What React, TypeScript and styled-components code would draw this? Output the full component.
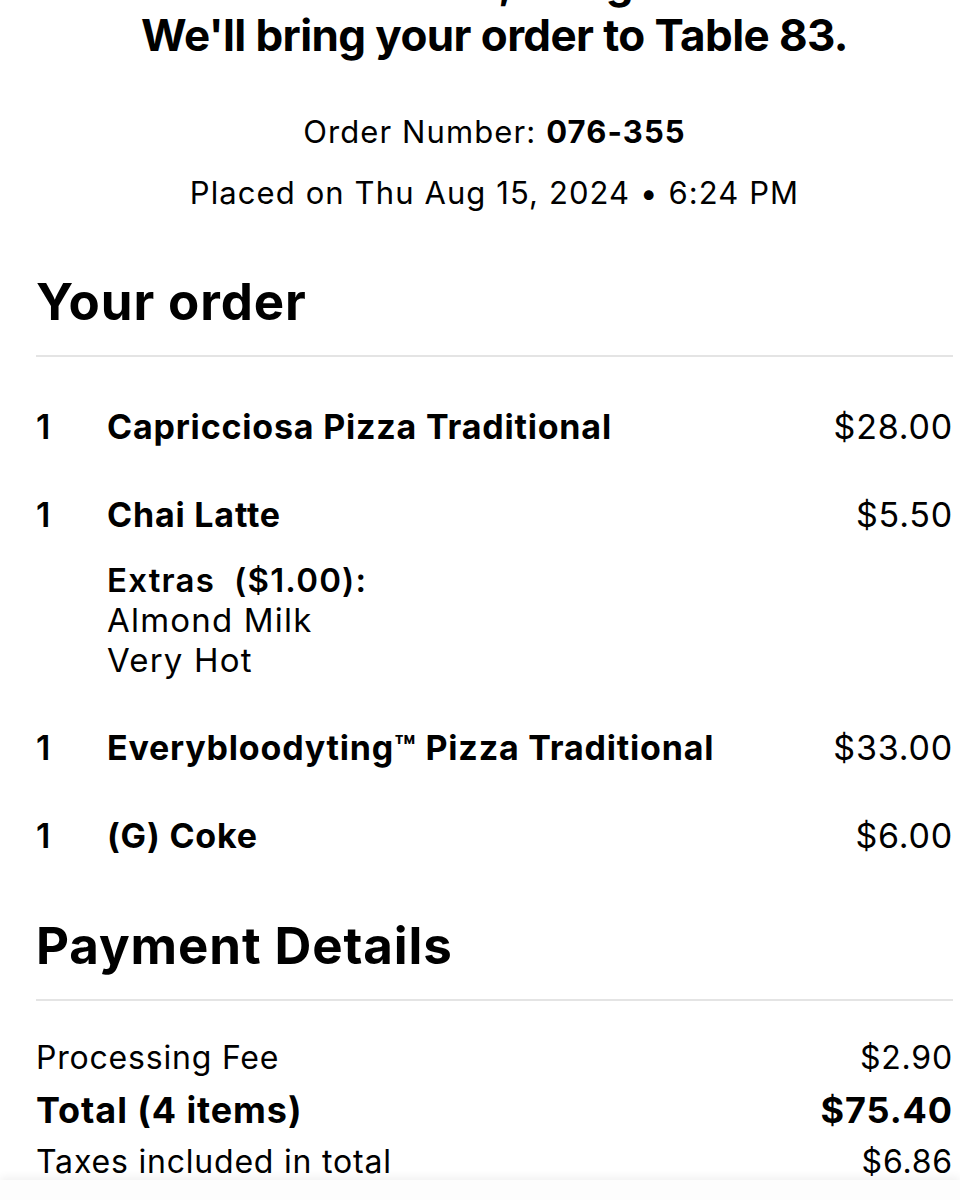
import React from "react";
import styled, { createGlobalStyle } from "styled-components";

// --- Global ---

const GlobalStyle = createGlobalStyle`
  html, body {
    margin: 0;
    padding: 0;
    background: #ffffff;
    color: #000000;
    font-family: Inter, "Noto Sans", "Liberation Sans", sans-serif;
    overflow: hidden;
  }
`;

// --- Styled Components ---

const Page = styled.div`
  padding: 0 7px 0 36px;
`;

const Header = styled.header`
  margin-top: -44px;
  text-align: center;
`;

const HeaderTitle = styled.h1`
  margin: 0;
  font-size: 44px;
  line-height: 53px;
  font-weight: 700;
  letter-spacing: -0.6px;
  white-space: nowrap;
`;

const Meta = styled.div`
  margin-top: 50px;
  display: flex;
  flex-direction: column;
  align-items: center;
  gap: 21px;
`;

const MetaLine = styled.p`
  margin: 0;
  font-size: 31px;
  line-height: 40px;
  font-weight: 400;
  letter-spacing: 1.1px;

  b {
    font-weight: 700;
  }
`;

const Section = styled.section<{ $top: number }>`
  margin-top: ${(p) => p.$top}px;
`;

const SectionTitle = styled.h2`
  margin: 0;
  font-size: 51px;
  line-height: 58px;
  font-weight: 700;
  letter-spacing: 0.9px;
  padding-bottom: 24px;
  border-bottom: 2px solid #e4e4e4;
`;

const ItemList = styled.div`
  padding-top: 50px;
  display: flex;
  flex-direction: column;
  gap: 48px;
`;

const ItemRow = styled.div`
  display: grid;
  grid-template-columns: 71px 1fr auto;
  font-size: 34px;
  line-height: 40px;
  letter-spacing: 0.8px;
`;

const Qty = styled.span`
  font-weight: 600;
`;

const ItemName = styled.span`
  font-weight: 700;
`;

const Price = styled.span`
  font-weight: 400;
  text-align: right;
`;

const Extras = styled.div`
  grid-column: 2 / 3;
  margin-top: 25px;
  font-size: 33px;
  line-height: 40px;
  letter-spacing: 1.2px;
`;

const ExtrasLabel = styled.div`
  font-weight: 600;
  white-space: pre;
`;

const Summary = styled.div`
  padding-top: 39px;
`;

const SummaryRow = styled.div<{ $strong?: boolean }>`
  display: flex;
  justify-content: space-between;
  font-size: ${(p) => (p.$strong ? 36 : 32)}px;
  line-height: ${(p) => (p.$strong ? 68 : 36)}px;
  font-weight: ${(p) => (p.$strong ? 700 : 400)};
  letter-spacing: ${(p) => (p.$strong ? 0.9 : 0.8)}px;
`;

const BottomBar = styled.div`
  position: fixed;
  left: 0;
  right: 0;
  bottom: 0;
  height: 20px;
  background: #fdfdfd;
  box-shadow: 0 -3px 8px rgba(0, 0, 0, 0.06);
`;

// --- Data ---

type Item = {
  qty: number;
  name: string;
  price: string;
  extras?: { label: string; options: string[] };
};

const items: Item[] = [
  { qty: 1, name: "Capricciosa Pizza Traditional", price: "$28.00" },
  {
    qty: 1,
    name: "Chai Latte",
    price: "$5.50",
    extras: { label: "Extras  ($1.00):", options: ["Almond Milk", "Very Hot"] },
  },
  { qty: 1, name: "Everybloodyting™ Pizza Traditional", price: "$33.00" },
  { qty: 1, name: "(G) Coke", price: "$6.00" },
];

// --- App ---

const App: React.FC = () => {
  return (
    <>
      <GlobalStyle />
      <Page>
        <Header>
          <HeaderTitle>Thanks, Craig!</HeaderTitle>
          <HeaderTitle>We'll bring your order to Table 83.</HeaderTitle>
        </Header>

        <Meta>
          <MetaLine>
            Order Number: <b>076-355</b>
          </MetaLine>
          <MetaLine>Placed on Thu Aug 15, 2024 • 6:24 PM</MetaLine>
        </Meta>

        <Section $top={60}>
          <SectionTitle>Your order</SectionTitle>
          <ItemList>
            {items.map((item) => (
              <ItemRow key={item.name}>
                <Qty>{item.qty}</Qty>
                <ItemName>{item.name}</ItemName>
                <Price>{item.price}</Price>
                {item.extras && (
                  <Extras>
                    <ExtrasLabel>{item.extras.label}</ExtrasLabel>
                    {item.extras.options.map((opt) => (
                      <div key={opt}>{opt}</div>
                    ))}
                  </Extras>
                )}
              </ItemRow>
            ))}
          </ItemList>
        </Section>

        <Section $top={61}>
          <SectionTitle>Payment Details</SectionTitle>
          <Summary>
            <SummaryRow>
              <span>Processing Fee</span>
              <span>$2.90</span>
            </SummaryRow>
            <SummaryRow $strong>
              <span>Total (4 items)</span>
              <span>$75.40</span>
            </SummaryRow>
            <SummaryRow>
              <span>Taxes included in total</span>
              <span>$6.86</span>
            </SummaryRow>
          </Summary>
        </Section>
      </Page>
      <BottomBar />
    </>
  );
};

export default App;
